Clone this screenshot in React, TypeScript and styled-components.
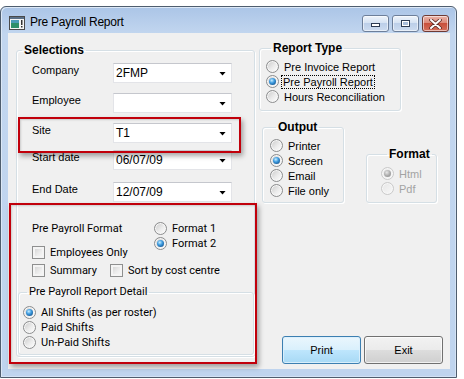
import React from "react";
import styled, { createGlobalStyle } from "styled-components";

const NARROW = `"Liberation Sans", Arial, sans-serif`;
const UI = `Roboto, "Liberation Sans", Arial, sans-serif`;
const BOLD = `"Liberation Sans", Arial, sans-serif`;

const GlobalStyle = createGlobalStyle`
	html, body {
		margin: 0;
		padding: 0;
		background: #fff;
	}
	body {
		width: 464px;
		height: 379px;
		overflow: hidden;
		font-family: ${NARROW};
		font-size: 11px;
		color: #000;
	}
	* {
		box-sizing: border-box;
	}
`;

const Window = styled.div`
	margin-top: 6px;
	width: 457px;
	height: 372px;
	border: 1px solid #4e5d6e;
	border-radius: 6px 6px 0 0;
	background: linear-gradient(#abc5e7 0, #c2d6ef 27px, #bfd4ee 100%);
	box-shadow: inset 1px 1px 0 #dce8f6, inset -1px -1px 0 #d3e2f4;
	display: flex;
	flex-direction: column;
`;

const TitleBar = styled.div`
	height: 26px;
	display: flex;
	align-items: flex-start;
	padding: 0 7px 0 8px;
`;

const TitleText = styled.span`
	margin: 8px 0 0 5px;
	font: 12px/14px ${BOLD};
	letter-spacing: -0.25px;
	color: #000;
`;

const CaptionButtons = styled.div`
	margin: 8px 0 0 auto;
	display: flex;
	gap: 3px;
`;

const CaptionButton = styled.div<{ $close?: boolean }>`
	width: 27px;
	height: 17px;
	border-radius: 3px;
	display: flex;
	align-items: center;
	justify-content: center;
	border: 1px solid ${(p) => (p.$close ? "#6e3a33" : "#6d7f9a")};
	background: ${(p) =>
		p.$close
			? "linear-gradient(#eab3a8 0, #dc8a7a 45%, #c9503c 50%, #d5705c 100%)"
			: "linear-gradient(#eef4fb 0, #d6e3f3 45%, #bccfe9 50%, #cddcf0 100%)"};
	box-shadow: inset 0 0 0 1px rgba(255, 255, 255, 0.55);
`;

const Client = styled.div`
	position: relative;
	margin: 0 6px 0 7px;
	height: 336px;
	background: #f0f0f0;
	display: flex;
	padding: 0 0 5px 8px;
`;

const LeftColumn = styled.div`
	margin-top: 10px;
	display: flex;
	flex-direction: column;
`;

const RightColumn = styled.div`
	margin: 8px 0 0 4px;
	display: flex;
	flex-direction: column;
	flex: 1;
`;

const GroupBox = styled.fieldset<{ $w: number; $pad?: string }>`
	margin: 0;
	padding: ${(p) => p.$pad || "0"};
	min-width: 0;
	width: ${(p) => p.$w}px;
	border: 1px solid #d5dfe5;
	border-radius: 3px;
	box-shadow: inset 1px 1px 0 #fff, 1px 1px 0 #fff;
`;

const DetailGroup = styled(GroupBox)`
	margin: 7px 0 0 1px;
	font: 11px/14px ${UI};
`;

const Legend = styled.legend<{ $bold?: boolean; $at?: number }>`
	margin-left: ${(p) => p.$at ?? 5}px;
	padding: 0 2px;
	font: ${(p) => (p.$bold ? `bold 12px/14px ${BOLD}` : `11px/14px ${UI}`)};
`;

const Fields = styled.div`
	padding-left: 15px;
	display: flex;
	flex-direction: column;
`;

const FieldRow = styled.div<{ $top: number }>`
	display: flex;
	align-items: flex-start;
	margin-top: ${(p) => p.$top}px;
`;

const FieldLabel = styled.span`
	width: 81px;
	line-height: 15px;
`;

const Combo = styled.div`
	width: 119px;
	height: 20px;
	background: #fff;
	border: 1px solid #e3e4e8;
	border-top-color: #c5c7cd;
	display: flex;
	align-items: center;
	padding-left: 2px;
	font-size: 12px;
`;

const ComboArrow = styled.span`
	margin: 1px 5px 0 auto;
	width: 7px;
	height: 4px;
	background: #000;
	clip-path: polygon(0 0, 100% 0, 50% 100%);
`;

const LowerPanel = styled.div`
	margin-top: 20px;
	font: 11px/14px ${UI};
	display: flex;
	flex-direction: column;
`;

const FormatRow = styled.div`
	display: flex;
`;

const FormatLeft = styled.div`
	width: 122px;
	display: flex;
	flex-direction: column;
`;

const FormatChoices = styled.div`
	margin-top: -1px;
	display: flex;
	flex-direction: column;
`;

const OptionsRow = styled.div`
	margin-top: 3px;
	display: flex;
`;

const Option = styled.label<{ $top?: number; $w?: number; $dim?: boolean }>`
	display: flex;
	align-items: center;
	height: 15px;
	gap: 5px;
	margin-top: ${(p) => p.$top ?? 0}px;
	width: ${(p) => (p.$w ? `${p.$w}px` : "auto")};
	color: ${(p) => (p.$dim ? "#a3a3a3" : "inherit")};
	white-space: nowrap;
`;

const RadioMark = styled.span<{ $on?: boolean; $dim?: boolean }>`
	flex: none;
	width: 13px;
	height: 13px;
	border-radius: 50%;
	border: 1px solid ${(p) => (p.$dim ? "#c9c9c9" : "#8c8d8e")};
	background: ${(p) =>
		p.$dim
			? "linear-gradient(135deg, #e6e6e6, #f8f8f8)"
			: "linear-gradient(135deg, #c9c9c9 0, #ececec 55%, #ffffff 100%)"};
	box-shadow: inset 0 0 0 1px #f7f7f7;
	display: flex;
	align-items: center;
	justify-content: center;
	&::after {
		content: "";
		display: ${(p) => (p.$on ? "block" : "none")};
		width: 7px;
		height: 7px;
		border-radius: 50%;
		background: ${(p) =>
			p.$dim
				? "radial-gradient(circle at 40% 35%, #e8e8e8 0, #a8a8a8 55%, #8a8a8a 100%)"
				: "radial-gradient(circle at 40% 35%, #c8eeff 0, #3f9ce0 40%, #0d4a84 90%)"};
	}
`;

const CheckMark = styled.span`
	flex: none;
	width: 13px;
	height: 13px;
	border: 1px solid #8e8f8f;
	background: linear-gradient(135deg, #cfcfcf 0, #eeeeee 60%, #fafafa 100%);
	box-shadow: inset 0 0 0 2px #f4f4f4;
`;

const FocusText = styled.span`
	outline: 1px dotted #000;
	outline-offset: 0;
	padding: 0 1px;
	margin-left: -2px;
	line-height: 12px;
`;

const OptionList = styled.div<{ $top: number }>`
	margin-top: ${(p) => p.$top}px;
	display: flex;
	flex-direction: column;
`;

const OutputRow = styled.div`
	margin: 9px 0 0 3px;
	display: flex;
	align-items: flex-end;
	gap: 22px;
`;

const ButtonRow = styled.div`
	margin-top: auto;
	padding-left: 23px;
	display: flex;
	gap: 3px;
`;

const DialogButton = styled.button<{ $primary?: boolean }>`
	width: 79px;
	height: 28px;
	padding: 0;
	border-radius: 3px;
	font: 11px ${NARROW};
	color: #000;
	border: 1px solid ${(p) => (p.$primary ? "#3c7fb1" : "#707070")};
	background: ${(p) =>
		p.$primary
			? "linear-gradient(#eaf6fd 0, #d9f0fc 50%, #bee6fd 50%, #a7d9f5 100%)"
			: "linear-gradient(#f2f2f2 0, #ebebeb 50%, #dddddd 50%, #cfcfcf 100%)"};
	box-shadow: inset 0 0 0 1px
		${(p) => (p.$primary ? "rgba(220, 240, 252, 0.9)" : "rgba(255, 255, 255, 0.7)")};
`;

const Callout = styled.div<{ $x: number; $y: number; $w: number; $h: number }>`
	position: absolute;
	left: ${(p) => p.$x}px;
	top: ${(p) => p.$y}px;
	width: ${(p) => p.$w}px;
	height: ${(p) => p.$h}px;
	border: 2px solid #c1000b;
	box-shadow: 2px 3px 5px rgba(0, 0, 0, 0.35), inset 1px 1px 2px rgba(0, 0, 0, 0.15);
	pointer-events: none;
`;

function AppIcon() {
	return (
		<svg width="16" height="14" viewBox="0 0 16 14" style={{ marginTop: 9, flex: "none" }}>
			<rect x="0.5" y="0.5" width="15" height="13" fill="#f4f4f4" stroke="#4a4a4a" />
			<rect x="1" y="1" width="14" height="2" fill="#5a6f86" />
			<rect x="2" y="4" width="8" height="8" fill="#2f8f6a" />
			<rect x="2" y="4" width="8" height="3" fill="#4c9bb8" />
			<rect x="12" y="4" width="1.5" height="5" fill="#333" />
			<rect x="12" y="10" width="1.5" height="1.5" fill="#333" />
		</svg>
	);
}

function MinGlyph() {
	return (
		<svg width="11" height="8" viewBox="0 0 11 8">
			<rect x="1.5" y="3.5" width="8" height="3" fill="#fff" stroke="#2b3a52" />
		</svg>
	);
}

function MaxGlyph() {
	return (
		<svg width="11" height="9" viewBox="0 0 11 9">
			<rect x="1.5" y="1.5" width="8" height="6" fill="#fff" stroke="#2b3a52" />
			<rect x="3" y="3" width="5" height="3" fill="#a9bedb" />
		</svg>
	);
}

function CloseGlyph() {
	return (
		<svg width="13" height="10" viewBox="0 0 13 10">
			<path d="M2 1 L11 9 M11 1 L2 9" stroke="#5a2a24" strokeWidth="3.6" strokeLinecap="round" />
			<path d="M2 1 L11 9 M11 1 L2 9" stroke="#fff" strokeWidth="2" strokeLinecap="round" />
		</svg>
	);
}

function Radio({ on, dim, children, top }: any) {
	return (
		<Option $top={top} $dim={dim}>
			<RadioMark $on={on} $dim={dim} />
			{children}
		</Option>
	);
}

function Check({ children, w, top }: any) {
	return (
		<Option $w={w} $top={top}>
			<CheckMark />
			{children}
		</Option>
	);
}

const fields = [
	{ label: "Company", value: "2FMP", top: 6 },
	{ label: "Employee", value: "", top: 10 },
	{ label: "Site", value: "T1", top: 10 },
	{ label: "Start date", value: "06/07/09", top: 7 },
	{ label: "End Date", value: "12/07/09", top: 12 },
];

export default function App() {
	return (
		<>
			<GlobalStyle />
			<Window>
				<TitleBar>
					<AppIcon />
					<TitleText>Pre Payroll Report</TitleText>
					<CaptionButtons>
						<CaptionButton>
							<MinGlyph />
						</CaptionButton>
						<CaptionButton>
							<MaxGlyph />
						</CaptionButton>
						<CaptionButton $close>
							<CloseGlyph />
						</CaptionButton>
					</CaptionButtons>
				</TitleBar>
				<Client>
					<LeftColumn>
						<GroupBox $w={239} $pad="0 0 1px 0">
							<Legend $bold>Selections</Legend>
							<Fields>
								{fields.map((f) => (
									<FieldRow key={f.label} $top={f.top}>
										<FieldLabel>{f.label}</FieldLabel>
										<Combo>
											{f.value}
											<ComboArrow />
										</Combo>
									</FieldRow>
								))}
								<LowerPanel>
									<FormatRow>
										<FormatLeft>
											<span>Pre Payroll Format</span>
											<Check top={9}>Employees Only</Check>
										</FormatLeft>
										<FormatChoices>
											<Radio>Format 1</Radio>
											<Radio on>Format 2</Radio>
										</FormatChoices>
									</FormatRow>
									<OptionsRow>
										<Check w={78}>Summary</Check>
										<Check>Sort by cost centre</Check>
									</OptionsRow>
								</LowerPanel>
							</Fields>
							<DetailGroup $w={236} $pad="0 0 4px 4px">
								<Legend $at={4}>Pre Payroll Report Detail</Legend>
								<OptionList $top={6}>
									<Radio on>All Shifts (as per roster)</Radio>
									<Radio>Paid Shifts</Radio>
									<Radio>Un-Paid Shifts</Radio>
								</OptionList>
							</DetailGroup>
						</GroupBox>
					</LeftColumn>
					<RightColumn>
						<GroupBox $w={142} $pad="0 0 6px 6px">
							<Legend $bold $at={5}>
								Report Type
							</Legend>
							<OptionList $top={4}>
								<Radio>Pre Invoice Report</Radio>
								<Radio on>
									<FocusText>Pre Payroll Report</FocusText>
								</Radio>
								<Radio>Hours Reconciliation</Radio>
							</OptionList>
						</GroupBox>
						<OutputRow>
							<GroupBox $w={82} $pad="0 0 4px 7px">
								<Legend $bold $at={6}>
									Output
								</Legend>
								<OptionList $top={4}>
									<Radio>Printer</Radio>
									<Radio on>Screen</Radio>
									<Radio>Email</Radio>
									<Radio>File only</Radio>
								</OptionList>
							</GroupBox>
							<GroupBox $w={71} $pad="0 0 6px 14px">
								<Legend $bold $at={6}>
									Format
								</Legend>
								<OptionList $top={5}>
									<Radio on dim>
										Html
									</Radio>
									<Radio dim>Pdf</Radio>
								</OptionList>
							</GroupBox>
						</OutputRow>
						<ButtonRow>
							<DialogButton $primary>Print</DialogButton>
							<DialogButton>Exit</DialogButton>
						</ButtonRow>
					</RightColumn>
					<Callout $x={10} $y={84} $w={223} $h={36} />
					<Callout $x={1} $y={170} $w={248} $h={161} />
				</Client>
			</Window>
		</>
	);
}
